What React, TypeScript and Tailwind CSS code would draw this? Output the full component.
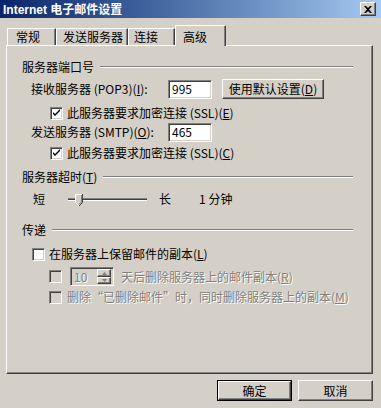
import React from "react";

const raised =
  "border border-t-white border-l-white border-r-[#404040] border-b-[#404040] shadow-[inset_-1px_-1px_0_#808080,inset_1px_1px_0_#d4d0c8]";
const sunken =
  "border border-t-[#808080] border-l-[#808080] border-r-white border-b-white shadow-[inset_1px_1px_0_#404040,inset_-1px_-1px_0_#d4d0c8]";

function Check({ checked = false, disabled = false }: { checked?: boolean; disabled?: boolean }) {
  return (
    <span
      className={`w-[13px] h-[13px] shrink-0 flex items-center justify-center ${sunken} ${
        disabled ? "bg-[#d4d0c8]" : "bg-white"
      }`}
    >
      {checked && (
        <svg width="9" height="9" viewBox="0 0 9 9">
          <path d="M1 3 L1 5 L3 7 L8 2 L8 0 L3 5 Z" fill="#000" />
        </svg>
      )}
    </span>
  );
}

function Group({ children }: { children: React.ReactNode }) {
  return (
    <div className="flex items-center h-[16px] ml-[15px] mr-[19px]">
      <span className="whitespace-nowrap">{children}</span>
      <div className="flex-1 ml-[6px] h-[2px] border-t border-t-[#808080] border-b border-b-white" />
    </div>
  );
}

function Tab({ label, w, pl, selected = false }: { label: string; w: string; pl: string; selected?: boolean }) {
  return (
    <div
      className={`${w} ${pl} ${
        selected ? "h-[21px] -mb-[1px] z-10 pt-[1px]" : "h-[17px]"
      } bg-[#d4d0c8] border-t border-l border-t-white border-l-white border-r border-r-[#404040] shadow-[inset_-1px_0_0_#808080] flex items-center relative`}
    >
      <span className="whitespace-nowrap">{label}</span>
    </div>
  );
}

export default function App() {
  return (
    <div className="w-[381px] h-[408px] bg-[#d4d0c8] flex flex-col text-[12px] leading-[16px] text-black font-['Noto_Sans_CJK_SC',sans-serif] overflow-hidden">
      {/* Title bar */}
      <div className="h-[18px] shrink-0 bg-gradient-to-r from-[#0a246a] to-[#a6caf0] flex items-center pl-[3px] pr-[5px]">
        <span className="text-white font-bold whitespace-nowrap flex-1 text-[12px] font-['Liberation_Sans','Noto_Sans_CJK_SC',sans-serif] pt-[1px]">
          Internet 电子邮件设置
        </span>
        <div className={`w-[16px] h-[14px] bg-[#d4d0c8] flex items-center justify-center ${raised}`}>
          <svg width="8" height="7" viewBox="0 0 8 7">
            <path d="M0 0 L2 0 L4 2 L6 0 L8 0 L5 3.5 L8 7 L6 7 L4 5 L2 7 L0 7 L3 3.5 Z" fill="#000" />
          </svg>
        </div>
      </div>

      {/* Tabs */}
      <div className="h-[27px] shrink-0 flex items-end pl-[7px] relative">
        <Tab label="常规" w="w-[49px]" pl="pl-[8px]" />
        <Tab label="发送服务器" w="w-[72px]" pl="pl-[6px]" />
        <Tab label="连接" w="w-[47px]" pl="pl-[5px]" />
        <Tab label="高级" w="w-[51px]" pl="pl-[7px]" selected />
      </div>

      {/* Panel */}
      <div className="ml-[6px] w-[367px] h-[329px] shrink-0 border border-t-white border-l-white border-r-[#404040] border-b-[#404040] shadow-[inset_-1px_-1px_0_#808080] flex flex-col">
        <div className="mt-[13px]">
          <Group>服务器端口号</Group>
        </div>

        <div className="flex items-center h-[20px] mt-[4px] ml-[24px]">
          <span className="w-[137px] whitespace-nowrap">
            接收服务器 (POP3)(<u>I</u>):
          </span>
          <div className={`w-[44px] h-[19px] bg-white flex items-center pl-[3px] ${sunken}`}>995</div>
          <div className={`ml-[10px] w-[102px] h-[20px] flex items-center justify-center ${raised}`}>
            使用默认设置(<u>D</u>)
          </div>
        </div>

        <div className="flex items-center h-[16px] mt-[6px] ml-[43px]">
          <Check checked />
          <span className="ml-[4px] whitespace-nowrap">
            此服务器要求加密连接 (SSL)(<u>E</u>)
          </span>
        </div>

        <div className="flex items-center h-[20px] mt-[1px] ml-[24px]">
          <span className="w-[137px] whitespace-nowrap">
            发送服务器 (SMTP)(<u>O</u>):
          </span>
          <div className={`w-[44px] h-[19px] bg-white flex items-center pl-[3px] ${sunken}`}>465</div>
        </div>

        <div className="flex items-center h-[16px] mt-[3px] ml-[43px]">
          <Check checked />
          <span className="ml-[4px] whitespace-nowrap">
            此服务器要求加密连接 (SSL)(<u>C</u>)
          </span>
        </div>

        <div className="mt-[8px]">
          <Group>
            服务器超时(<u>T</u>)
          </Group>
        </div>

        <div className="flex items-center h-[16px] mt-[6px] ml-[26px]">
          <span>短</span>
          <svg className="ml-[23px]" width="80" height="16" viewBox="0 0 80 16">
            <rect x="0" y="7" width="79" height="1" fill="#808080" />
            <rect x="0" y="8" width="79" height="1" fill="#404040" />
            <rect x="0" y="9" width="79" height="1" fill="#ffffff" />
            <path d="M7 3 L15 3 L15 11 L11 15 L7 11 Z" fill="#d4d0c8" />
            <path d="M7 3 L15 3" stroke="#ffffff" strokeWidth="1" transform="translate(0,0.5)" />
            <path d="M7.5 3 L7.5 11.5 L11 15" stroke="#ffffff" strokeWidth="1" fill="none" />
            <path d="M14.5 3 L14.5 11.5 L11 15" stroke="#404040" strokeWidth="1" fill="none" />
            <path d="M13.5 4 L13.5 11 L11 13.5" stroke="#808080" strokeWidth="1" fill="none" />
          </svg>
          <span className="ml-[11px]">长</span>
          <span className="ml-[28px] whitespace-nowrap">1 分钟</span>
        </div>

        <div className="mt-[15px]">
          <Group>传递</Group>
        </div>

        <div className="flex items-center h-[16px] mt-[8px] ml-[25px]">
          <Check />
          <span className="ml-[4px] whitespace-nowrap">
            在服务器上保留邮件的副本(<u>L</u>)
          </span>
        </div>

        <div className="flex items-center h-[19px] mt-[5px] ml-[42px] text-[#808080] [text-shadow:1px_1px_0_#fff]">
          <Check disabled />
          <div className={`ml-[8px] w-[44px] h-[19px] bg-[#d4d0c8] flex items-center pl-[3px] pr-[2px] ${sunken}`}>
            <span className="flex-1">10</span>
            <div className="flex flex-col w-[14px] h-[15px]">
              <div className={`h-[8px] flex items-center justify-center ${raised}`}>
                <svg width="5" height="3" viewBox="0 0 5 3">
                  <path d="M2.5 0 L5 3 L0 3 Z" fill="#808080" />
                </svg>
              </div>
              <div className={`h-[7px] flex items-center justify-center ${raised}`}>
                <svg width="5" height="3" viewBox="0 0 5 3">
                  <path d="M0 0 L5 0 L2.5 3 Z" fill="#808080" />
                </svg>
              </div>
            </div>
          </div>
          <span className="ml-[7px] whitespace-nowrap">
            天后删除服务器上的邮件副本(<u>R</u>)
          </span>
        </div>

        <div className="flex items-center h-[16px] mt-[3px] ml-[42px] text-[#808080] [text-shadow:1px_1px_0_#fff]">
          <Check disabled />
          <span className="ml-[5px] whitespace-nowrap">
            删除“已删除邮件”时，同时删除服务器上的副本(<u>M</u>)
          </span>
        </div>
      </div>

      {/* Buttons */}
      <div className="flex justify-end gap-[6px] mt-[6px] mr-[8px]">
        <div className="w-[75px] h-[21px] border border-black">
          <div className={`w-full h-full flex items-center justify-center ${raised}`}>确定</div>
        </div>
        <div className={`w-[75px] h-[21px] flex items-center justify-center ${raised}`}>取消</div>
      </div>
    </div>
  );
}
